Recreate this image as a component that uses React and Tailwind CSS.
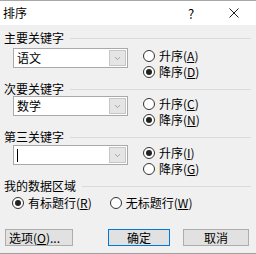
import { ChevronDown } from "lucide-react";

const font = { fontFamily: '"Noto Sans CJK SC", "Noto Sans", sans-serif' };

function Radio({ checked, label, hot }) {
	return (
		<div className="flex items-center h-[16px]">
			<span className="w-[12px] h-[12px] rounded-full border border-[#333333] bg-white flex items-center justify-center shrink-0">
				{checked && <span className="w-[6px] h-[6px] rounded-full bg-[#222222]" />}
			</span>
			<span className="ml-[4px] leading-none">
				{label}(<u>{hot}</u>)
			</span>
		</div>
	);
}

function Combo({ value, caret }) {
	return (
		<div className="flex w-[115px] h-[20px] border border-[#a9a9a9] bg-white">
			<div className="flex-1 flex items-center pl-[3px] leading-none">
				{caret ? <span className="w-px h-[13px] bg-black" /> : value}
			</div>
			<div className="w-[17px] my-px mr-px bg-[#e5e5e5] border border-[#c6c6c6] flex items-center justify-center">
				<ChevronDown size={9} strokeWidth={1.5} className="text-[#707070]" />
			</div>
		</div>
	);
}

function GroupLabel({ text, className }) {
	return (
		<div className={"flex items-center h-[14px] pl-[4px] pr-[5px] " + className}>
			<span className="leading-none">{text}</span>
			<span className="flex-1 h-px bg-[#dadada] ml-[6px]" />
		</div>
	);
}

function KeyGroup({ label, value, caret, up, down, upKey, downKey, className, rowClass }) {
	return (
		<div className={className}>
			<GroupLabel text={label} />
			<div className={"flex pl-[13px] " + rowClass}>
				<Combo value={value} caret={caret} />
				<div className="ml-[15px]">
					<Radio checked={up} label="升序" hot={upKey} />
					<Radio checked={down} label="降序" hot={downKey} />
				</div>
			</div>
		</div>
	);
}

export default function App() {
	return (
		<div style={font} className="w-[256px] h-[254px] bg-[#f0f0f0] text-[12px] text-black flex flex-col overflow-hidden border-b border-[#a0a0a0]">
			<div className="h-[25px] bg-white border-t border-[#a8a8a8] flex items-center pl-[3px] shrink-0">
				<span className="leading-none">排序</span>
				<span className="ml-[161px] text-[13px] leading-none">?</span>
				<svg className="ml-[35px]" width="10" height="10" viewBox="0 0 10 10">
					<path d="M0.5 0.5L9.5 9.5M9.5 0.5L0.5 9.5" stroke="#222" strokeWidth="1" />
				</svg>
			</div>

			<KeyGroup className="mt-[6px]" rowClass="mt-[3px]" label="主要关键字" value="语文" up={false} down={true} upKey="A" downKey="D" />
			<KeyGroup className="mt-[2px]" rowClass="mt-0" label="次要关键字" value="数学" up={false} down={true} upKey="C" downKey="N" />
			<KeyGroup className="mt-[2px]" rowClass="mt-px" label="第三关键字" caret up={true} down={false} upKey="I" downKey="G" />

			<GroupLabel text="我的数据区域" className="mt-[2px]" />
			<div className="flex pl-[12px] mt-[2px]">
				<Radio checked label="有标题行" hot="R" />
				<div className="ml-[18px]">
					<Radio checked={false} label="无标题行" hot="W" />
				</div>
			</div>

			<div className="flex mt-[18px] px-[5px]">
				<button className="w-[68px] h-[17px] bg-[#e1e1e1] border border-[#adadad] flex items-center pl-[3px] leading-none">
					选项(<u>O</u>)...
				</button>
				<button className="ml-[35px] w-[62px] h-[17px] bg-[#e1e1e1] border border-[#0078d7] flex items-center justify-center leading-none">
					确定
				</button>
				<button className="ml-[13px] w-[66px] h-[17px] bg-[#e1e1e1] border border-[#adadad] flex items-center justify-center leading-none">
					取消
				</button>
			</div>
		</div>
	);
}
